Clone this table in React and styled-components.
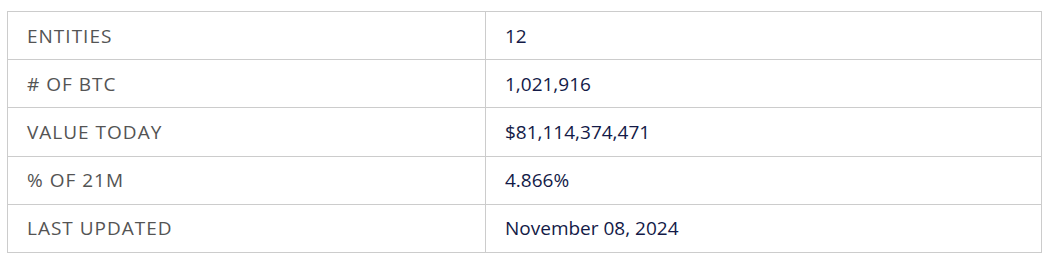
import React from "react";
import styled, { createGlobalStyle } from "styled-components";

const GlobalStyle = createGlobalStyle`
  html, body {
    margin: 0;
    padding: 0;
    background: #ffffff;
  }
  body {
    font-family: "Open Sans", "Noto Sans", "Liberation Sans", sans-serif;
  }
`;

const Page = styled.div`
  padding: 11px 0 0 7px;
`;

const Table = styled.div`
  width: 1035px;
  box-sizing: border-box;
  border: 1px solid #cccccc;
`;

const Row = styled.div`
  display: grid;
  grid-template-columns: 478px 1fr;
  height: ${(p) => (p.$first ? "47.2px" : "48.2px")};
  box-sizing: border-box;
  border-top: ${(p) => (p.$first ? "none" : "1px solid #cccccc")};
`;

const Cell = styled.div`
  display: flex;
  align-items: center;
  padding-left: 19px;
  font-size: 19px;
  line-height: 1;
  box-sizing: border-box;
`;

const Label = styled(Cell)`
  border-right: 1px solid #cccccc;
  color: #545454;
  text-transform: uppercase;
  letter-spacing: 1px;
  padding-top: 1px;
`;

const Value = styled(Cell)`
  color: #131a47;
  padding-top: 1px;
`;

const rows = [
  ["Entities", "12"],
  ["# of BTC", "1,021,916"],
  ["Value Today", "$81,114,374,471"],
  ["% of 21M", "4.866%"],
  ["Last Updated", "November 08, 2024"],
];

export default function App() {
  return (
    <>
      <GlobalStyle />
      <Page>
        <Table>
          {rows.map(([label, value], i) => (
            <Row key={label} $first={i === 0}>
              <Label>{label}</Label>
              <Value>{value}</Value>
            </Row>
          ))}
        </Table>
      </Page>
    </>
  );
}
